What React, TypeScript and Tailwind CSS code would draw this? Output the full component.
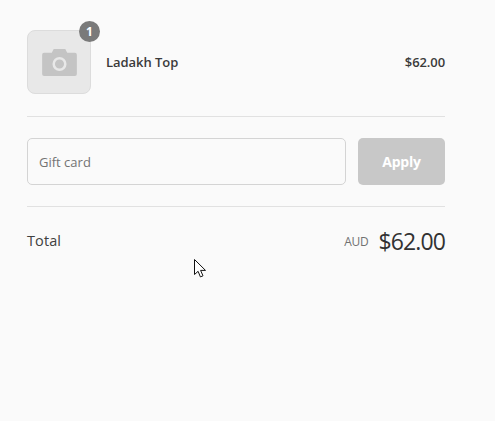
import { Fragment } from 'react'

function CameraIcon() {
  return (
    <svg width="35" height="27" viewBox="0 0 36 28" className="block">
      <path d="M2 4h8l2-4h12l2 4h8a2 2 0 0 1 2 2v20a2 2 0 0 1-2 2H2a2 2 0 0 1-2-2V6a2 2 0 0 1 2-2z" fill="#c4c4c4" />
      <circle cx="18" cy="15.5" r="6" fill="none" stroke="#e8e8e8" strokeWidth="2.6" />
    </svg>
  )
}

function Cursor() {
  return (
    <svg width="13" height="20" viewBox="0 0 13 20" className="absolute left-[194px] top-[259px]">
      <path d="M0.5 0.5v15l3.6-3.2 2.3 5.6 2.6-1.1-2.4-5.4h4.9z" fill="#fff" stroke="#111" strokeWidth="1" strokeLinejoin="miter" />
    </svg>
  )
}

export default function App() {
  return (
    <Fragment>
      <div className="relative h-[421px] w-[495px] overflow-hidden bg-[#fafafa] pl-[27px] pr-[50px] pt-[30px] font-['Open_Sans',sans-serif] text-[#323232]">
        <div className="flex h-[64px] items-center">
          <div className="relative flex h-[64px] w-[64px] shrink-0 items-center justify-center rounded-lg border border-[#dcdcdc] bg-[#e8e8e8]">
            <CameraIcon />
            <span className="absolute -right-[10px] -top-[10px] flex h-[21px] w-[21px] items-center justify-center rounded-full bg-[#7a7a7a] text-[12px] font-bold text-white">
              1
            </span>
          </div>
          <span className="ml-[15px] mt-[1px] text-[13px] font-semibold tracking-[-0.05px] text-[#3a3a3a]">Ladakh Top</span>
          <span className="ml-auto mt-[1px] text-[13px] font-semibold tracking-[-0.1px] text-[#3a3a3a]">$62.00</span>
        </div>

        <div className="mt-[22px] h-px bg-[#e1e1e1]" />

        <div className="mt-[21px] flex gap-3">
          <div className="flex h-[47px] flex-1 items-center rounded-[5px] border border-[#d4d4d4] bg-[#fafafa] px-[11px] pt-[2px] text-[13px] text-[#737373]">
            Gift card
          </div>
          <div className="flex h-[47px] w-[87px] items-center justify-center rounded-[5px] bg-[#c8c8c8] text-[14px] font-bold tracking-[-0.2px] text-white">
            Apply
          </div>
        </div>

        <div className="mt-[21px] h-px bg-[#e1e1e1]" />

        <div className="mt-[19px] flex items-center justify-between">
          <span className="text-[14.5px] tracking-[0.1px] text-[#404040]">Total</span>
          <div className="mt-[1px] flex items-center gap-[10px]">
            <span className="mt-[2px] text-[12px] tracking-[-0.2px] text-[#717171]">AUD</span>
            <span className="text-[23px] leading-[28px] tracking-[-0.9px]">$62.00</span>
          </div>
        </div>

        <Cursor />
      </div>
    </Fragment>
  )
}
